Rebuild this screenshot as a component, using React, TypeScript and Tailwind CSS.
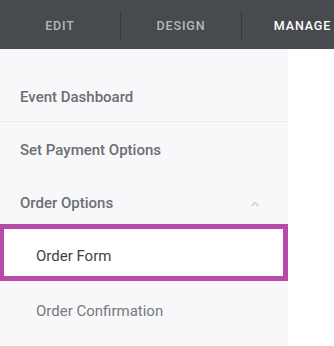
import { ChevronUp } from 'lucide-react'

const tabs = [
  { label: 'EDIT', active: false, width: 'w-[120px]' },
  { label: 'DESIGN', active: false, width: 'w-[121px]' },
  { label: 'MANAGE', active: true, width: 'w-[122px]' },
]

export default function App() {
  return (
    <div className="h-[346px] w-[334px] overflow-hidden bg-white font-['Roboto',sans-serif]">
      {/* Top tabs */}
      <div className="flex h-[49px] bg-[#474a4f]">
        {tabs.map((t, i) => (
          <div key={t.label} className={`flex shrink-0 items-center ${t.width}`}>
            {i > 0 && <div className="h-[28px] w-px bg-[#35383c]" />}
            <span
              className={`flex-1 pt-[3px] text-center text-[12.5px] font-medium tracking-[0.07em] ${
                t.active ? 'text-white' : 'text-[#b5b7ba]'
              }`}
            >
              {t.label}
            </span>
          </div>
        ))}
      </div>

      {/* Sidebar */}
      <div className="h-[297px] w-[288px] bg-[#f8f8fa] pt-[22px]">
        <div className="flex h-[51px] items-center border-b border-[#ececef] px-5 pt-[2px] text-[15px] font-medium text-[#6b6e74]">
          Event Dashboard
        </div>
        <div className="flex h-[54px] items-center px-5 pt-[3px] text-[15px] font-medium text-[#6b6e74]">
          Set Payment Options
        </div>
        <div className="flex h-[48px] items-center justify-between px-5 pt-[7px] text-[15px] font-medium text-[#6b6e74]">
          <span>Order Options</span>
          <ChevronUp className="mr-[7px] h-[12px] w-[12px] text-[#c8c9cd]" strokeWidth={2.5} />
        </div>
        <div className="flex h-[57px] items-center border-[5px] border-l-4 border-[#b84aa9] bg-white pl-8 pt-[7px] text-[15px] text-[#3f4248]">
          Order Form
        </div>
        <div className="flex h-[56px] items-center pl-9 pt-[4px] text-[15px] text-[#76797f]">
          Order Confirmation
        </div>
      </div>
    </div>
  )
}
